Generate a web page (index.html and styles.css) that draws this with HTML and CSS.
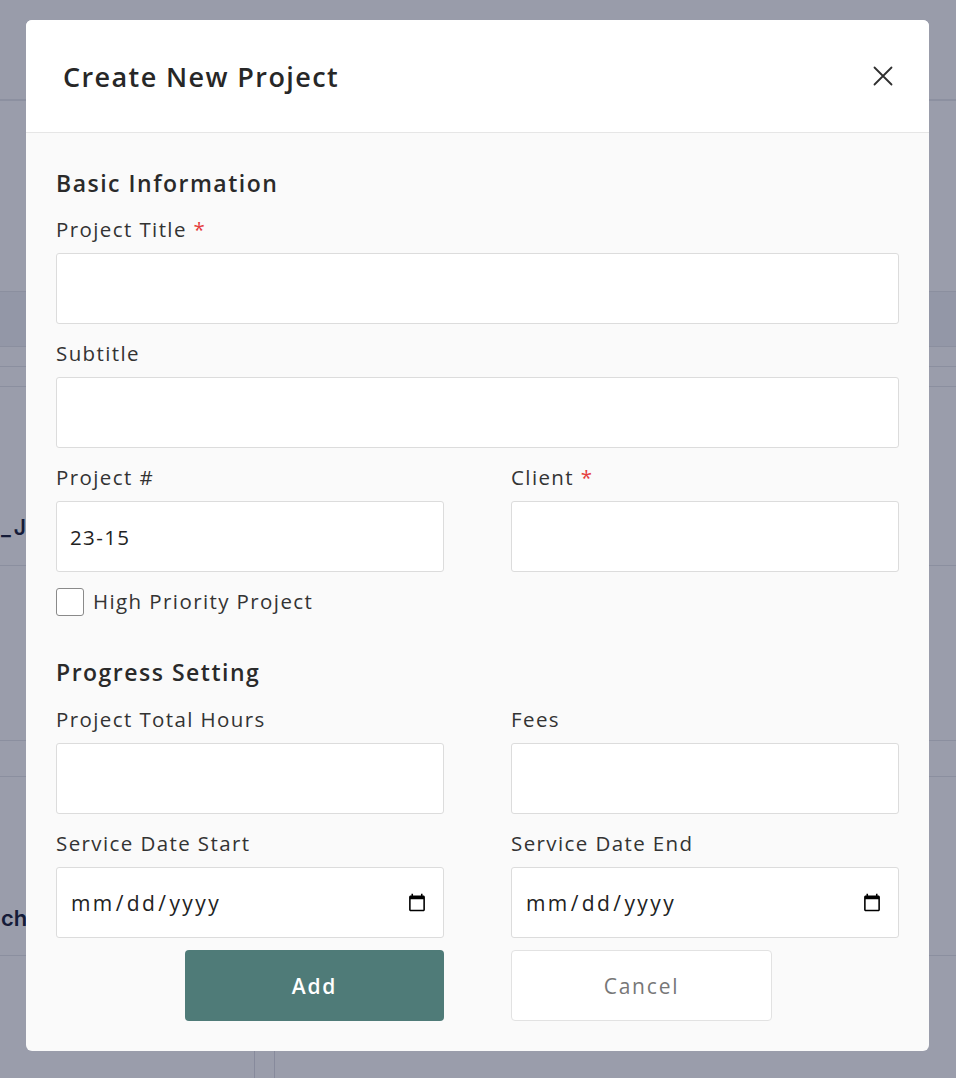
FILE: index.html
```html
<!DOCTYPE html>
<html lang="en">
<head>
<meta charset="utf-8">
<title>Create New Project</title>
<link rel="stylesheet" href="styles.css">
</head>
<body>
<div class="app">
  <header class="app-header"></header>
  <div class="app-body">
    <div class="row row-gap"></div>
    <div class="row row-band"></div>
    <div class="row row-thin"></div>
    <div class="row row-thin"></div>
    <div class="row row-tall"><span class="cell-text cell-job">_JOB</span></div>
    <div class="row row-mid"></div>
    <div class="row row-short"></div>
    <div class="row row-tall"><span class="cell-text">chair</span></div>
    <div class="row row-rest"><span class="vline"></span><span class="vline"></span></div>
  </div>
</div>
<div class="overlay"></div>
<div class="modal-wrap">
  <div class="modal">
    <div class="modal-header">
      <h2 class="modal-title">Create New Project</h2>
      <button class="close-btn" type="button" aria-label="Close">
        <svg width="20" height="20" viewBox="0 0 20 20"><path d="M1.5 1.5 L18.5 18.5 M18.5 1.5 L1.5 18.5" stroke="#2f2f2f" stroke-width="1.8" stroke-linecap="round" fill="none"/></svg>
      </button>
    </div>
    <div class="modal-body">
      <h3 class="section-title">Basic Information</h3>
      <div class="field">
        <label class="label">Project Title <span class="req">*</span></label>
        <input class="input" type="text">
      </div>
      <div class="field">
        <label class="label">Subtitle</label>
        <input class="input" type="text">
      </div>
      <div class="grid">
        <div class="field field-last">
          <label class="label">Project #</label>
          <input class="input" type="text" value="23-15">
        </div>
        <div class="field field-last">
          <label class="label">Client <span class="req">*</span></label>
          <input class="input" type="text">
        </div>
      </div>
      <label class="check-row"><input class="checkbox" type="checkbox"><span>High Priority Project</span></label>

      <h3 class="section-title section-second">Progress Setting</h3>
      <div class="grid">
        <div class="field">
          <label class="label">Project Total Hours</label>
          <input class="input" type="text">
        </div>
        <div class="field">
          <label class="label">Fees</label>
          <input class="input" type="text">
        </div>
        <div class="field field-last">
          <label class="label">Service Date Start</label>
          <input class="input input-date" type="date">
        </div>
        <div class="field field-last">
          <label class="label">Service Date End</label>
          <input class="input input-date" type="date">
        </div>
      </div>
      <div class="grid actions">
        <button class="btn btn-primary" type="button">Add</button>
        <button class="btn btn-secondary" type="button">Cancel</button>
      </div>
    </div>
  </div>
</div>
</body>
</html>
```

FILE: styles.css
```css
* { box-sizing: border-box; }
html, body { margin: 0; padding: 0; }
body {
  width: 956px;
  height: 1078px;
  overflow: hidden;
  font-family: "Open Sans", "Noto Sans", "DejaVu Sans", sans-serif;
  background: #ffffff;
}

/* background application page */
.app { width: 956px; height: 1078px; display: flex; flex-direction: column; }
.app-header { height: 101px; background: #fdfdfe; border-bottom: 2px solid #e6e7ec; flex: none; }
.app-body { flex: 1; display: flex; flex-direction: column; }
.row { border-bottom: 1px solid #e4e5ea; display: flex; align-items: flex-end; flex: none; }
.row-gap { height: 191px; }
.row-band { height: 55px; background: #f3f4f7; }
.row-thin { height: 20px; }
.row-tall { height: 179px; padding-bottom: 25px; }
.row-mid { height: 175px; }
.row-short { height: 36px; }
.row-rest { flex: 1; border-bottom: none; padding-left: 254px; gap: 19px; align-items: stretch; }
.vline { width: 1px; background: #dcdde3; }
.cell-text { font-family: "Inter", sans-serif; font-size: 22px; font-weight: 600; color: #0d1430; line-height: 24px; padding-left: 1px; }
.cell-job { letter-spacing: 3px; font-size: 21px; }

.overlay { position: fixed; inset: 0; background: rgba(31, 37, 68, 0.45); }

/* modal */
.modal-wrap { position: fixed; inset: 0; padding: 20px 0 0 26px; }
.modal {
  width: 903px;
  background: #fafafa;
  border-radius: 6px;
  overflow: hidden;
}
.modal-header {
  height: 113px;
  background: #ffffff;
  border-bottom: 1px solid #e6e6e6;
  display: flex;
  align-items: center;
  justify-content: space-between;
  padding: 0 36px 0 37px;
}
.modal-title {
  margin: 0;
  font-size: 27px;
  font-weight: 600;
  color: #272727;
  letter-spacing: 1.4px;
}
.close-btn {
  border: 0;
  background: transparent;
  padding: 0;
  width: 20px;
  height: 20px;
  display: flex;
}
.modal-body { padding: 35px 30px 30px; }

.section-title {
  margin: 0 0 20px;
  font-size: 23px;
  line-height: 30px;
  font-weight: 600;
  color: #2a2a2a;
  letter-spacing: 1.5px;
}
.section-second { margin-top: 41px; margin-bottom: 21px; }

.field { display: flex; flex-direction: column; margin-bottom: 18px; }
.field-last { margin-bottom: 0; }
.label {
  font-size: 20.5px;
  line-height: 22px;
  color: #333333;
  margin-bottom: 13px;
  letter-spacing: 1.4px;
}
.req { color: #e53e3e; }
.input {
  height: 71px;
  width: 100%;
  border: 1px solid #dcdcdc;
  border-radius: 3px;
  background: #ffffff;
  padding: 0 13px;
  font-family: inherit;
  font-size: 20.5px;
  letter-spacing: 1.4px;
  color: #222222;
  outline: none;
}
.input-date { padding-right: 14px; font-size: 21px; letter-spacing: 2.4px; }
.input-date::-webkit-calendar-picker-indicator { width: 20px; height: 20px; }

.grid { display: grid; grid-template-columns: 388px 388px; column-gap: 67px; }

.check-row {
  display: flex;
  align-items: center;
  gap: 9px;
  margin-top: 16px;
  height: 28px;
  font-size: 20.5px;
  letter-spacing: 1.4px;
  color: #333333;
}
.check-row span { margin-top: -2px; }
.checkbox {
  appearance: none;
  -webkit-appearance: none;
  margin: 0;
  width: 28px;
  height: 28px;
  border: 1px solid #8a8a8a;
  border-radius: 3px;
  background: #ffffff;
}

.actions { margin-top: 12px; }
.btn {
  height: 71px;
  border-radius: 4px;
  font-family: inherit;
  font-size: 21px;
  letter-spacing: 1.8px;
}
.btn-primary {
  justify-self: end;
  width: 259px;
  border: 0;
  background: #4f7b78;
  color: #ffffff;
  font-weight: 600;
}
.btn-secondary {
  justify-self: start;
  width: 261px;
  border: 1px solid #e2e2e2;
  background: #ffffff;
  color: #777777;
  font-weight: 500;
}
```
